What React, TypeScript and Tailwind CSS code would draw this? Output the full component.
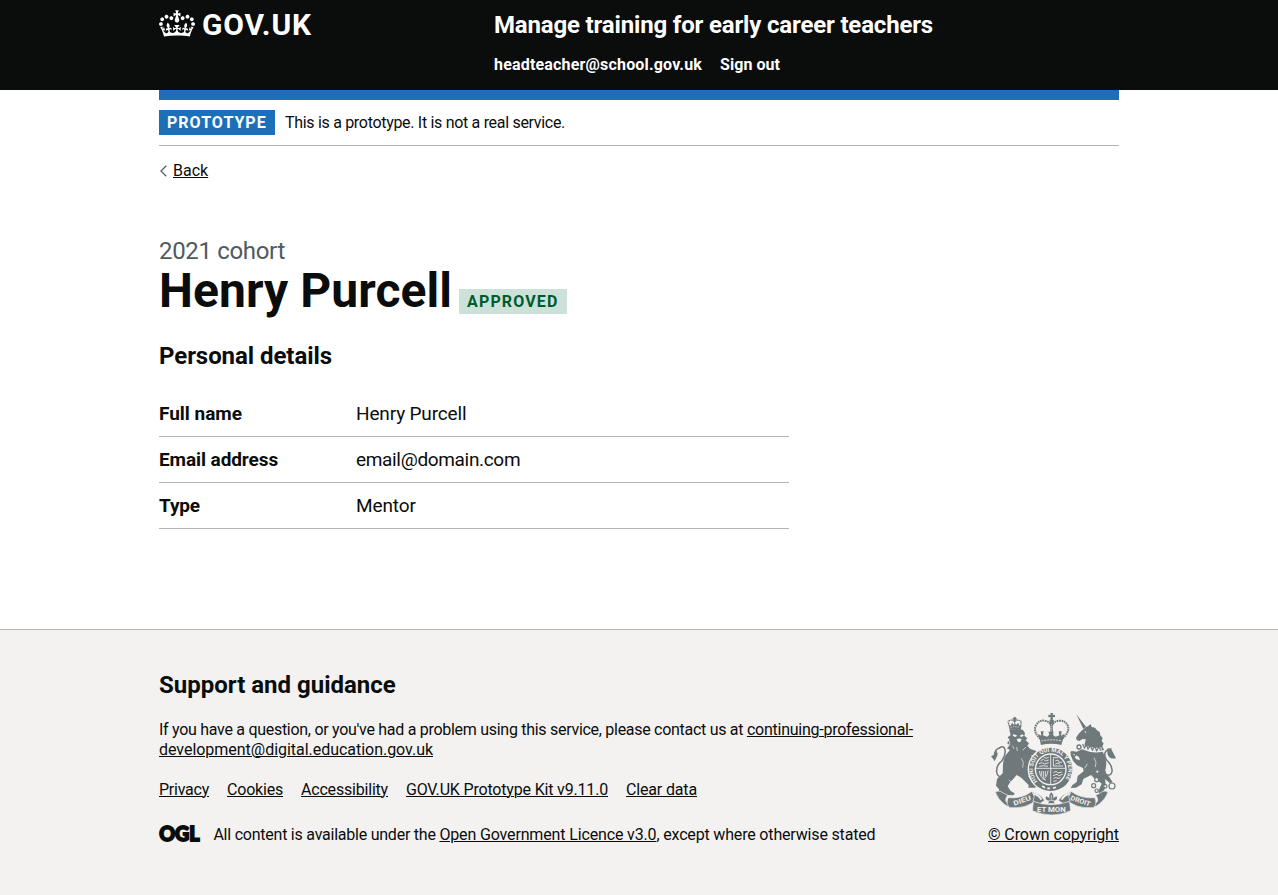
import type { ReactNode } from "react";

function FooterLink({ children, className = "" }: { children: ReactNode; className?: string }) {
  return (
    <a href="#" className={`underline decoration-1 underline-offset-[1px] ${className}`}>
      {children}
    </a>
  );
}

function CrownLogo() {
  return (
    <svg className="h-[27px] w-9 shrink-0" viewBox="0 0 132 97" fill="currentColor" aria-hidden="true">
      <path
        fillRule="evenodd"
        d="M25 30.2c3.5 1.5 7.7-.2 9.1-3.7 1.5-3.6-.2-7.8-3.9-9.2-3.6-1.4-7.6.3-9.1 3.9-1.4 3.5.3 7.5 3.9 9zM9 39.5c3.6 1.5 7.8-.2 9.2-3.7 1.5-3.6-.2-7.8-3.9-9.1-3.6-1.5-7.6.2-9.1 3.8-1.4 3.5.3 7.5 3.8 9zM4.4 57.2c3.5 1.5 7.7-.2 9.1-3.8 1.5-3.6-.2-7.7-3.9-9.1-3.5-1.5-7.6.3-9.1 3.8-1.4 3.5.3 7.6 3.9 9.1zm38.3-21.4c3.5 1.5 7.7-.2 9.1-3.8 1.5-3.6-.2-7.7-3.9-9.1-3.6-1.5-7.6.3-9.1 3.8-1.3 3.6.4 7.7 3.9 9.1zm64.4-5.6c-3.6 1.5-7.8-.2-9.1-3.7-1.5-3.6.2-7.8 3.8-9.2 3.6-1.4 7.7.3 9.2 3.9 1.3 3.5-.4 7.5-3.9 9zm15.9 9.3c-3.6 1.5-7.7-.2-9.1-3.7-1.5-3.6.2-7.8 3.7-9.1 3.6-1.5 7.7.2 9.2 3.8 1.5 3.5-.3 7.5-3.8 9zm4.7 17.7c-3.6 1.5-7.8-.2-9.2-3.8-1.5-3.6.2-7.7 3.9-9.1 3.6-1.5 7.7.3 9.2 3.8 1.3 3.5-.4 7.6-3.9 9.1zM89.3 35.8c-3.6 1.5-7.8-.2-9.2-3.8-1.4-3.6.2-7.7 3.9-9.1 3.6-1.5 7.7.3 9.2 3.8 1.4 3.6-.3 7.7-3.9 9.1zM69.7 17.7l8.9 4.7V9.3l-8.9 2.8c-.2-.3-.5-.6-.9-.9L72.4 0H59.6l3.5 11.2c-.3.3-.6.5-.9.9l-8.8-2.8v13.1l8.8-4.7c.3.3.6.7.9.9l-5 15.4v.1c-.2.8-.4 1.6-.4 2.4 0 4.1 3.1 7.5 7 8.1h.2c.3 0 .7.1 1 .1.4 0 .7 0 1-.1h.2c4-.6 7.1-4.1 7.1-8.1 0-.8-.1-1.7-.4-2.4V34l-5.1-15.4c.4-.2.7-.6 1-.9zM66 92.8c16.9 0 32.8 1.1 47.1 3.2 4-16.9 8.9-26.7 14-33.5l-9.6-3.4c1 4.9 1.1 7.2 0 10.2-1.5-1.4-3-4.3-4.2-8.7L108.6 76c2.8-2 5-3.2 7.5-3.3-4.4 9.4-10 11.9-13.6 11.2-4.3-.8-6.3-4.6-5.6-7.9 1-4.7 5.7-5.9 8-.5 4.3-8.7-3-11.4-7.6-8.8 7.1-7.2 7.9-13.5 2.1-21.1-8 6.1-8.1 12.3-4.5 20.8-4.7-5.4-12.1-2.5-9.5 6.2 3.4-5.2 7.9-2 7.2 3.1-.6 4.3-6.4 7.8-13.5 7.2-10.3-.9-10.9-8-11.2-13.8 2.5-.5 7.1 1.8 11 7.3L80.2 60c-4.1 4.4-8 5.3-12.3 5.4 1.4-4.4 8-11.6 8-11.6H55.5s6.4 7.2 7.9 11.6c-4.2-.1-8-1-12.3-5.4l1.4 16.4c3.9-5.5 8.5-7.7 10.9-7.3-.3 5.8-.9 12.8-11.1 13.8-7.2.6-12.9-2.9-13.5-7.2-.7-5 3.8-8.3 7.1-3.1 2.7-8.7-4.6-11.6-9.4-6.2 3.7-8.5 3.6-14.7-4.6-20.8-5.8 7.6-5 13.9 2.2 21.1-4.7-2.6-11.9.1-7.7 8.8 2.3-5.5 7.1-4.2 8.1.5.7 3.3-1.3 7.1-5.7 7.9-3.5.7-9-1.8-13.5-11.2 2.5.1 4.7 1.3 7.5 3.3l-4.7-15.4c-1.2 4.4-2.7 7.2-4.3 8.7-1.1-3-.9-5.3 0-10.2l-9.5 3.4c5 6.9 9.9 16.7 14 33.5 14.8-2.1 30.8-3.2 47.7-3.2z"
      />
    </svg>
  );
}

function RoyalArms() {
  return (
    <svg
      className="h-[102px] w-[125px] overflow-visible fill-[#6f797b] stroke-none font-['Roboto',sans-serif] font-bold"
      viewBox="33 24 375 306"
      aria-hidden="true"
    >
      <defs>
        <path id="garter" d="M173 229A53 53 0 1 1 251 229" />
      </defs>

      {/* Lion: crown */}
      <path d="M89 75l-4-17 7 4 4-9 6 7 2-8 4 8 7-7 3 9 7-4-3 17q-16-5-33 0z" />
      <path d="M87 58q-6-10 3-12 8-3 14 5 6-8 14-5 9 2 3 12" className="fill-none stroke-[#6f797b]" strokeWidth="4" strokeDasharray="4 1.5" />
      <path d="M101 36h6v14h-6zM98 39h12v5H98z" />
      <path d="M92 67q12-4 26 0" className="fill-none stroke-[#f3f2f1]" strokeWidth="2" strokeDasharray="4 3" />
      {/* Lion: mane, body and legs */}
      <path d="M88 75q20-6 40-1l7 10-2 8 9 8-5 6 10 9-5 7 9 10c14 4 22 6 31 18l-7 8-22-8 6 10 20 12 5 17-9 1-20-14-7 4c5 14 3 24-3 34l17 20 9 5-5 9h-21l1-8-22-22-14-8c-10 12-22 22-27 34l9 14 12 7-3 6-28-1-14-6-3-13-8-9 3-20 17-17c2-22-2-38 10-56l12-14-9-5 8-9-8-7 8-9-6-8 9-7z" />
      <path d="M101 87l11 5-7 4-7-4zM126 88l6 4-8 4-5-3zM110 103q8-5 15 0l-4 8h-7z" className="fill-[#f3f2f1]" />
      <path d="M98 122l4 10M110 126l2 12M88 108l2 12M138 126l-10 10M124 160q10 12 4 28M86 224l10 10" className="fill-none stroke-[#f3f2f1]" strokeWidth="2" />
      {/* Lion: tail */}
      <path d="M72 212Q52 220 50 201t15-33q13-20 10-34T58 129q-12 4-15 20" className="fill-none stroke-[#6f797b]" strokeWidth="4.5" />
      <path d="M33 154l9-5 8-12q5 9 1 17l-7 15-5-8z" />

      {/* Unicorn: horn, head and mane */}
      <path d="M289 28l29 37-8 7z" />
      <path d="M318 66l6-2 8-7 3 9 10 2 6 8 8 5 2 10 7 8-3 8 6 9-4 8 5 11-14 3-30-4-16-6c0-10 5-16 5-25l-9-1-10 6-8-3-2-7 7-10 9-10z" />
      <path d="M313 79l7 1-4 4z" className="fill-[#f3f2f1]" />
      {/* Unicorn: collar */}
      <path d="M309 124q28 12 56 8" className="fill-none stroke-[#f3f2f1]" strokeWidth="9" />
      <path d="M308 117l5 12 6-10 5 13 7-10 6 13 7-11 6 13 6-11 7 10" className="fill-none stroke-[#6f797b]" strokeWidth="3.5" />
      {/* Unicorn: body and legs */}
      <path d="M306 133q32 14 62 7c12 20 13 38 8 56 2 10 5 14 12 20l10 16-9 2-14-12 3 24-8 12 9 10-22 3-1-15 9-20c-8-8-22-14-32-26l-23 12-5 16-17 10-16 1 6-10 12-8 3-18 18-14-2-10-18-8-12-14-8-20 7-2 10 17 12 4-3-10-14-8-13-3 4-7 16 2z" />
      <path d="M342 158q10 14 4 28M322 176l-8 14" className="fill-none stroke-[#f3f2f1]" strokeWidth="2" />
      <circle cx="281" cy="148" r="6" className="fill-none stroke-[#6f797b]" strokeWidth="4" />
      <circle cx="297" cy="126" r="6" className="fill-none stroke-[#6f797b]" strokeWidth="4" />
      {/* Unicorn: tail */}
      <path d="M374 208q20 7 22-8t-10-28q-15-16-11-28t20-12" className="fill-none stroke-[#6f797b]" strokeWidth="4.5" />
      <path d="M381 131q12-2 17 9l10 20q-18 4-25-11z" />
      {/* Unicorn: chain */}
      <g className="fill-[#f3f2f1] stroke-[#6f797b]" strokeWidth="3.5">
        <circle cx="352" cy="200" r="5" />
        <circle cx="350" cy="224" r="6" />
        <circle cx="341" cy="242" r="6" />
        <circle cx="350" cy="257" r="5" />
        <circle cx="376" cy="244" r="5" />
        <circle cx="396" cy="243" r="9" />
      </g>

      {/* Garter */}
      <circle cx="212" cy="193" r="69" className="fill-[#f3f2f1]" />
      <circle cx="212" cy="193" r="65" />
      <circle cx="212" cy="193" r="48" className="fill-[#f3f2f1]" />
      <text className="fill-[#f3f2f1]" fontSize="17">
        <textPath href="#garter" textLength="236" lengthAdjust="spacingAndGlyphs">
          HONI SOIT QUI MAL Y PENSE
        </textPath>
      </text>
      <path d="M186 243l9 5M202 250h8M219 250l9-3" className="fill-none stroke-[#f3f2f1]" strokeWidth="5" />

      {/* Shield */}
      <circle cx="212" cy="193" r="44" />
      <path d="M212 149v88M168 190h88" className="fill-none stroke-[#f3f2f1]" strokeWidth="2.5" />
      <g className="fill-none stroke-[#f3f2f1]" strokeWidth="2.5">
        <path d="M182 167l8-4 6 5 10-3M176 176l10-3 8 4 12-4M192 157l6 3 8-3M178 184l12-2 14 2" />
        <path d="M219 158h16M219 183h30M220 160v23M226 168l8-3 4 8 8-2M226 177l8-3 6 4" />
        <path d="M178 198q2 20 20 28M204 197q-2 20-16 26M190 198v20M196 198v16M184 198v14" />
        <path d="M220 203l8-4 6 5 12-3M219 212l12-4 5 4 12-4M220 221l8-4 6 4 8-4M220 229l10-2" />
      </g>

      {/* Royal crown */}
      <path d="M211 24h8l-1 6 7-1v8l-7-1 1 7h-8l1-7-7 1v-8l7 1z" />
      <path
        d="M186 106Q158 82 167 63t27-16q18 3 20 20 3-17 22-20 22-1 28 17t-22 42"
        className="fill-[#f3f2f1] stroke-[#6f797b]"
        strokeWidth="6"
        strokeDasharray="5 2"
      />
      <path d="M209 46h12v10l-3 8 2 26h-10l2-26-3-8z" />
      <circle cx="215" cy="48" r="6" />
      <path d="M215 58v25" className="fill-none stroke-[#f3f2f1]" strokeWidth="2.5" strokeDasharray="3 3" />
      <path d="M175 87l9 5-2-13h9l-2 12 12 4 7-6-3-9h9l6-1-1 11 8 5 11-4-2-12h9l-2 13 11-6-10 34q-30-7-61 0z" />
      <path d="M184 108q30-7 62 0" className="fill-none stroke-[#f3f2f1]" strokeWidth="2.5" strokeDasharray="6 3" />

      {/* Motto scroll */}
      <g className="stroke-[#f3f2f1]" strokeWidth="2">
        <path d="M46 262q8-7 17-2 8 6 20 10-12 18 0 24l14 12q-14 2-24-8-20-16-27-36z" />
        <path d="M384 262q-8-7-17-2-8 6-20 10 12 18 0 24l-14 12q14 2 24-8 20-16 27-36z" />
        <path d="M84 278q42 4 72-19l13 25q-28 28-80 24-12-10-5-30z" />
        <path d="M345 278q-42 4-72-19l-13 25q28 28 80 24 12-10 5-30z" />
        <path d="M156 260l24 10 14 16-17 12-18-10 4-14zM273 260l-24 10-14 16 17 12 18-10-4-14z" />
        <path d="M160 289q52 20 109 0l3 28q-56 26-115 0z" />
      </g>
      <path d="M160 266q18 4 24 18M269 266q-18 4-24 18" className="fill-none stroke-[#f3f2f1]" strokeWidth="6" />
      <g className="fill-[#f3f2f1]" fontSize="20">
        <text x="103" y="302" textLength="54" lengthAdjust="spacingAndGlyphs" transform="rotate(-19 103 302)">DIEU</text>
        <text x="270" y="284" textLength="62" lengthAdjust="spacingAndGlyphs" transform="rotate(19 270 284)">DROIT</text>
        <text x="171" y="321" textLength="86" lengthAdjust="spacingAndGlyphs">ET MON</text>
      </g>
      <circle cx="214" cy="278" r="17" className="fill-[#f3f2f1]" />
      <path d="M214 262q9 9 5 18l10-6q5 5-1 11l-8 3 4 7h-20l4-7-8-3q-6-6-1-11l10 6q-4-9 5-18z" />
      <path d="M214 270v14M206 286h16" className="fill-none stroke-[#f3f2f1]" strokeWidth="2" />
    </svg>
  );
}

const details = [
  { label: "Full name", value: "Henry Purcell", labelTrack: "tracking-[-0.02px]", valueTrack: "tracking-[-0.15px]" },
  { label: "Email address", value: "email@domain.com", labelTrack: "tracking-[-0.09px]", valueTrack: "tracking-[-0.33px]" },
  { label: "Type", value: "Mentor", labelTrack: "tracking-[-0.14px]", valueTrack: "tracking-[-0.1px]" },
];

const footerLinks = [
  { text: "Privacy", track: "tracking-[-0.24px]" },
  { text: "Cookies", track: "tracking-[-0.2px]" },
  { text: "Accessibility", track: "tracking-[-0.2px]" },
  { text: "GOV.UK Prototype Kit v9.11.0", track: "tracking-[-0.178px]" },
  { text: "Clear data", track: "tracking-[-0.155px]" },
];

export default function App() {
  return (
    <div className="flex min-h-screen flex-col bg-white font-['Roboto','Liberation_Sans',sans-serif] text-base leading-5 text-[#0b0c0c]">
      <header className="h-[90px] bg-[#0b0c0c] text-white">
        <div className="mx-auto flex w-[960px] pt-2.5">
          <a href="#" className="flex w-[335px] items-start gap-[7px]">
            <CrownLogo />
            <span className="text-[30px] leading-[30px] font-bold tracking-[0.87px]">GOV.UK</span>
          </a>
          <div>
            <a href="#" className="block text-2xl leading-[30px] font-bold tracking-[-0.167px]">
              Manage training for early career teachers
            </a>
            <nav className="mt-[15px] flex gap-[18px] font-bold">
              <a href="#" className="tracking-[0.18px]">headteacher@school.gov.uk</a>
              <a href="#" className="tracking-[0.05px]">Sign out</a>
            </nav>
          </div>
        </div>
      </header>

      <div className="mx-auto w-[960px] grow">
        <div className="h-2.5 bg-[#1d70b8]" />
        <div className="flex items-center gap-2.5 border-b border-[#b1b4b6] py-2.5">
          <strong className="h-[25px] w-[116px] bg-[#1d70b8] pl-2 leading-[25px] font-bold tracking-[1.02px] text-white">
            PROTOTYPE
          </strong>
          <span className="tracking-[-0.308px]">This is a prototype. It is not a real service.</span>
        </div>

        <a href="#" className="mt-[15px] flex w-fit items-center">
          <svg className="h-3 w-3.5 fill-none stroke-[#505a5f]" viewBox="0 0 14 12" aria-hidden="true">
            <path d="M7.3.8L1.9 6l5.4 5.2" strokeWidth="1.2" />
          </svg>
          <span className="underline decoration-1 underline-offset-[1px]">Back</span>
        </a>

        <main className="w-[630px] pt-[55px]">
          <span className="block text-2xl leading-[30px] tracking-[-0.33px] text-[#505a5f]">2021 cohort</span>
          <div className="flex">
            <h1 className="text-5xl leading-[50px] font-bold tracking-[0.07px]">Henry Purcell</h1>
            <strong className="mt-[23px] ml-[7px] h-[25px] w-[108px] bg-[#cce2d8] pl-2 leading-[25px] font-bold tracking-[1.15px] text-[#005a30]">
              APPROVED
            </strong>
          </div>

          <h2 className="mt-[25px] text-2xl leading-[30px] font-bold tracking-[-0.064px]">Personal details</h2>
          <dl className="mt-5 text-[19px] leading-[25px]">
            {details.map((d) => (
              <div key={d.label} className="flex border-b border-[#b1b4b6] py-2.5">
                <dt className={`w-[197px] font-bold ${d.labelTrack}`}>{d.label}</dt>
                <dd className={d.valueTrack}>{d.value}</dd>
              </div>
            ))}
          </dl>
        </main>
      </div>

      <footer className="h-[266px] border-t border-[#b1b4b6] bg-[#f3f2f1] pt-10">
        <div className="mx-auto flex w-[960px] items-end justify-between">
          <div className="w-[790px]">
            <h2 className="text-2xl leading-[30px] font-bold">Support and guidance</h2>
            <p className="mt-5 tracking-[-0.287px]">
              If you have a question, or you've had a problem using this service, please contact us at{" "}
              <FooterLink>
                <span className="tracking-[-0.244px]">continuing-professional-</span>
                <wbr />
                <span className="tracking-[-0.03px]">development@digital.education.gov.uk</span>
              </FooterLink>
            </p>
            <ul className="mt-5 flex gap-[18px]">
              {footerLinks.map((l) => (
                <li key={l.text}>
                  <FooterLink className={l.track}>{l.text}</FooterLink>
                </li>
              ))}
            </ul>
            <div className="mt-[25px] flex">
              <svg className="mr-3 h-[18px] w-[42px] overflow-visible fill-[#0b0c0c] stroke-[#0b0c0c]" viewBox="0 0 42 18" aria-hidden="true">
                <text x="0.2" y="16" textLength="40.4" lengthAdjust="spacingAndGlyphs" strokeWidth="1.8" className="font-['Lato',sans-serif] text-[21px] font-black">
                  OGL
                </text>
              </svg>
              <span className="pl-[0.4px] tracking-[-0.234px]">
                All content is available under the{" "}
                <FooterLink className="tracking-[-0.147px]">Open Government Licence v3.0</FooterLink>
                <span className="tracking-[-0.169px]">, except where otherwise stated</span>
              </span>
            </div>
          </div>
          <div className="flex flex-col items-center gap-2.5">
            <RoyalArms />
            <FooterLink className="tracking-[-0.087px]">© Crown copyright</FooterLink>
          </div>
        </div>
      </footer>
    </div>
  );
}
